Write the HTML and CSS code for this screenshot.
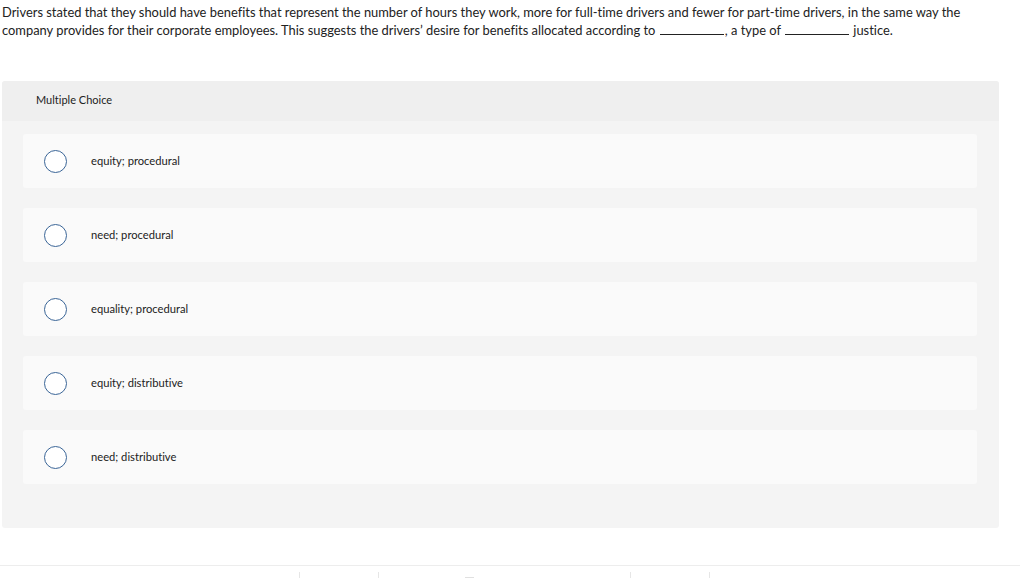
FILE: index.html
```html
<!DOCTYPE html>
<html>
<head>
<meta charset="utf-8">
<link rel="stylesheet" href="styles.css">
</head>
<body>
<div class="page">
  <p class="question">Drivers stated that they should have benefits that represent the number of hours they work, more for full-time drivers and fewer for part-time drivers, in the same way the company provides for their corporate employees. This suggests the drivers’ desire for benefits allocated according to <span class="blank"></span>, a type of <span class="blank"></span> justice.</p>
  <div class="panel">
    <div class="panel-head">Multiple Choice</div>
    <div class="options">
      <div class="option"><span class="radio"></span><span class="label">equity; procedural</span></div>
      <div class="option"><span class="radio"></span><span class="label">need; procedural</span></div>
      <div class="option"><span class="radio"></span><span class="label">equality; procedural</span></div>
      <div class="option"><span class="radio"></span><span class="label">equity; distributive</span></div>
      <div class="option"><span class="radio"></span><span class="label">need; distributive</span></div>
    </div>
  </div>
  <div class="footer">
    <span class="tick t1"></span>
    <span class="tick t2"></span>
    <span class="dash"></span>
    <span class="tick t3"></span>
    <span class="tick t4"></span>
  </div>
</div>
</body>
</html>
```
FILE: styles.css
```css
* { box-sizing: border-box; }
html, body { margin: 0; padding: 0; background: #fff; }
body {
  font-family: Lato, "Liberation Sans", sans-serif;
  font-variant-ligatures: none;
  color: #222;
  overflow: hidden;
}
.page { width: 1024px; height: 578px; position: relative; }
.question {
  margin: 0;
  padding: 3px 0 0 2px;
  width: 975px;
  height: 40px;
  font-size: 12.9px;
  line-height: 18px;
  color: #222;
}
.blank {
  display: inline-block;
  width: 64px;
  height: 1px;
  background: #222;
  vertical-align: baseline;
  margin: 0 1px;
}
.panel {
  margin: 41px 0 0 2px;
  width: 997px;
  height: 447px;
  background: #f4f4f4;
  border-radius: 3px;
  overflow: hidden;
}
.panel-head {
  height: 40px;
  background: #efefef;
  padding: 0 0 3px 34px;
  display: flex;
  align-items: center;
  font-size: 11px;
  color: #222;
}
.options {
  padding: 13px 22px 0 21px;
  display: flex;
  flex-direction: column;
  gap: 20px;
}
.option {
  height: 54px;
  background: #fafafa;
  border-radius: 3px;
  display: flex;
  align-items: center;
  padding-left: 21px;
}
.radio {
  width: 23px;
  height: 23px;
  border: 1.5px solid #3a6597;
  border-radius: 50%;
  background: #fff;
  flex: none;
}
.label {
  margin-left: 24px;
  padding-bottom: 1px;
  font-size: 11.2px;
  color: #222;
}
.footer {
  position: absolute;
  left: 0;
  top: 565px;
  width: 1020px;
  height: 13px;
  border-top: 1px solid #ededed;
}
.tick {
  position: absolute;
  top: 6px;
  width: 1px;
  height: 7px;
  background: #e6e6e6;
}
.t1 { left: 299px; }
.t2 { left: 378px; }
.t3 { left: 630px; }
.t4 { left: 709px; }
.dash {
  position: absolute;
  top: 11px;
  left: 465px;
  width: 9px;
  height: 1px;
  background: #e0e0e0;
}
```
